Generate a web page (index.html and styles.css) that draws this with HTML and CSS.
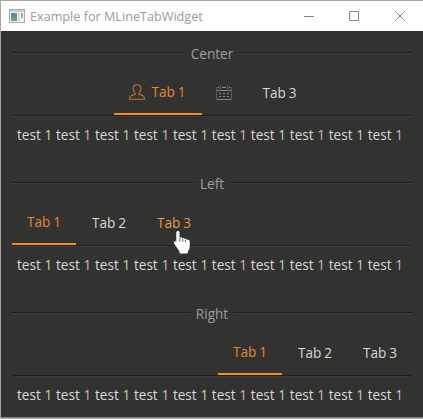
FILE: index.html
```html
<!DOCTYPE html>
<html lang="en">
<head>
<meta charset="utf-8">
<title>Example for MLineTabWidget</title>
<link rel="stylesheet" href="styles.css">
</head>
<body>
<div class="window">
  <header class="titlebar">
    <svg class="app-icon" width="16" height="14" viewBox="0 0 16 14">
      <rect x=".5" y=".5" width="15" height="13" fill="#f4f5f5" stroke="#a5abab"/>
      <rect x="1" y="1" width="14" height="2" fill="#c8cece"/>
      <rect x="2" y="4" width="6" height="8" fill="#6387a0"/>
      <rect x="2" y="8" width="5" height="4" fill="#6e9a87"/>
      <rect x="9" y="4" width="2" height="8" fill="#d5dadb"/>
      <rect x="12" y="4" width="2" height="5" fill="#94b0a0"/>
    </svg>
    <h1 class="title">Example for MLineTabWidget</h1>
    <svg class="controls" width="112" height="12" viewBox="0 0 112 12" fill="none" stroke="#7f8888">
      <path d="M0 6.500H10M45.500 1.500h9v9h-9zM91 1l10 10M101 1L91 11"/>
    </svg>
  </header>
  <main class="content">
    <section class="group">
      <h2 class="divider"><span class="divider-text">Center</span></h2>
      <nav class="tabs tabs-center">
        <a class="tab active">
          <svg class="icon" width="16" height="16" viewBox="0 0 16 16" fill="none" stroke="#c27632" stroke-width="1.1">
            <path d="M8 .7C5.600.7 4.200 2.300 4.200 4.600c0 2.100.8 3.700 2 4.600v1.100C4.300 10.900.6 11.500.6 14v1.300h14.800V14c0-2.500-3.700-3.100-5.600-3.700V9.200c1.200-.9 2-2.500 2-4.600C11.800 2.300 10.400.7 8 .7z"/>
          </svg>
          <span class="label">Tab 1</span>
        </a>
        <a class="tab tab-icon">
          <svg class="icon" width="16" height="16" viewBox="0 0 16 16" fill="none">
            <path d="M.5 2.500V14.500M15.500 2.500V14.500" stroke="#465b82"/>
            <path d="M1 14.500H15M1 2.500H3M6 2.500H10M13 2.500H15M1 5.500H15" stroke="#828579"/>
            <path d="M4.500 1V4M11.500 1V4" stroke="#60718c"/>
            <path d="M3 8.500h2M7 8.500h2M11 8.500h2M3 11.500h2M7 11.500h2M11 11.500h2" stroke="#8c8c90"/>
          </svg>
        </a>
        <a class="tab"><span class="label">Tab 3</span></a>
      </nav>
      <p class="page">test <i>1</i> test <i>1</i> test <i>1</i> test <i>1</i> test <i>1</i> test <i>1</i> test <i>1</i> test <i>1</i> test <i>1</i> test <i>1</i></p>
    </section>
    <section class="group">
      <h2 class="divider"><span class="divider-text">Left</span></h2>
      <nav class="tabs">
        <a class="tab active"><span class="label">Tab 1</span></a>
        <a class="tab"><span class="label">Tab 2</span></a>
        <a class="tab hover"><span class="label">Tab 3</span>
          <svg class="cursor" width="18" height="24" viewBox="0 0 17 23">
            <path d="M4.500 1c1 0 1.700.6 1.700 1.700v4.600c1-.6 2.200-.3 2.600.6 1.100-.5 2.200-.1 2.600.9 1-.5 2-.1 2.500.7 1-.2 2 .4 2 1.600v5.200c0 2-1.400 3.400-1.900 4.900v1.300H6.300v-1.300C5.300 19 3.300 16.500 1.500 14 .3 12.400.8 10.700 2 10.700c.4 0 .7.2 1 .5V2.700C3 1.600 3.600 1 4.500 1z" fill="#fff"/>
            <path d="M6.500 7.500v3.500M9.200 8.300v3M11.800 9.300v2.500" stroke="#444" stroke-width=".8"/>
          </svg>
        </a>
      </nav>
      <p class="page">test <i>1</i> test <i>1</i> test <i>1</i> test <i>1</i> test <i>1</i> test <i>1</i> test <i>1</i> test <i>1</i> test <i>1</i> test <i>1</i></p>
    </section>
    <section class="group">
      <h2 class="divider"><span class="divider-text">Right</span></h2>
      <nav class="tabs tabs-right">
        <a class="tab active"><span class="label">Tab 1</span></a>
        <a class="tab"><span class="label">Tab 2</span></a>
        <a class="tab"><span class="label">Tab 3</span></a>
      </nav>
      <p class="page">test <i>1</i> test <i>1</i> test <i>1</i> test <i>1</i> test <i>1</i> test <i>1</i> test <i>1</i> test <i>1</i> test <i>1</i> test <i>1</i></p>
    </section>
  </main>
</div>
</body>
</html>
```
FILE: styles.css
```css
* { box-sizing: border-box; }
body {
  margin: 0;
  font-family: "Open Sans", "Noto Sans", sans-serif;
  font-size: 13.6px;
  color: #d9d9d9;
}
.window {
  height: 419px;
  overflow: hidden;
  background: #323230;
  border: solid #a6a6a6;
  border-width: 1px 0 1px 1px;
  box-shadow: inset 0 -1px #8d8b8a;
}
.titlebar {
  display: flex;
  align-items: center;
  height: 30px;
  padding: 0 17px 0 8px;
  background: #fff;
}
.app-icon { margin-top: -1px; }
.title {
  margin: 0 auto 0 5px;
  font-size: 12.65px;
  font-weight: 400;
  line-height: 28px;
  color: #999d98;
  white-space: nowrap;
}
.controls { margin-top: -1px; margin-right: -10px; }
.content { padding: 11px 11px 0; }
.group { height: 130px; }
.divider {
  display: flex;
  align-items: flex-start;
  gap: 5px;
  height: 29px;
  margin: 0;
  font-size: 13.6px;
  font-weight: 400;
  color: #a09da2;
}
.divider::before, .divider::after {
  content: "";
  flex: 1;
  height: 2px;
  margin-top: 10px;
  background: linear-gradient(#1f1f1e 50%, #3c3c3a 50%);
}
.divider-text { line-height: 24px; }
.tabs {
  display: flex;
  gap: 1px;
  height: 45px;
  border-bottom: 1px solid #1f1f1e;
  box-shadow: 0 1px #3c3c3a;
}
.tabs-center { justify-content: center; padding-left: 1px; }
.tabs-right { justify-content: flex-end; }
.tab {
  position: relative;
  display: flex;
  justify-content: center;
  gap: 6px;
  min-width: 64px;
  height: 44px;
  padding-top: 11px;
  line-height: 22px;
}
.tab.active {
  padding-top: 10px;
  color: #e6892c;
  border-bottom: 2px solid #fa8c16;
}
.tab.hover { color: #e69840; }
.tab .label { word-spacing: -.5px; }
.tabs-center .active { width: 88px; }
.tab-icon { min-width: 44px; padding-right: 2px; }
.icon { flex: none; margin-top: 3px; }
.label { white-space: nowrap; }
.cursor { position: absolute; left: 31px; top: 29px; z-index: 1; }
.page {
  margin: 0;
  padding: 7px 0 0 5px;
  line-height: 24px;
  white-space: nowrap;
  word-spacing: .16px;
}
.page i { font-style: normal; color: #b5dcae; }
.page i:nth-child(even) { color: #dfb0c9; }
```
